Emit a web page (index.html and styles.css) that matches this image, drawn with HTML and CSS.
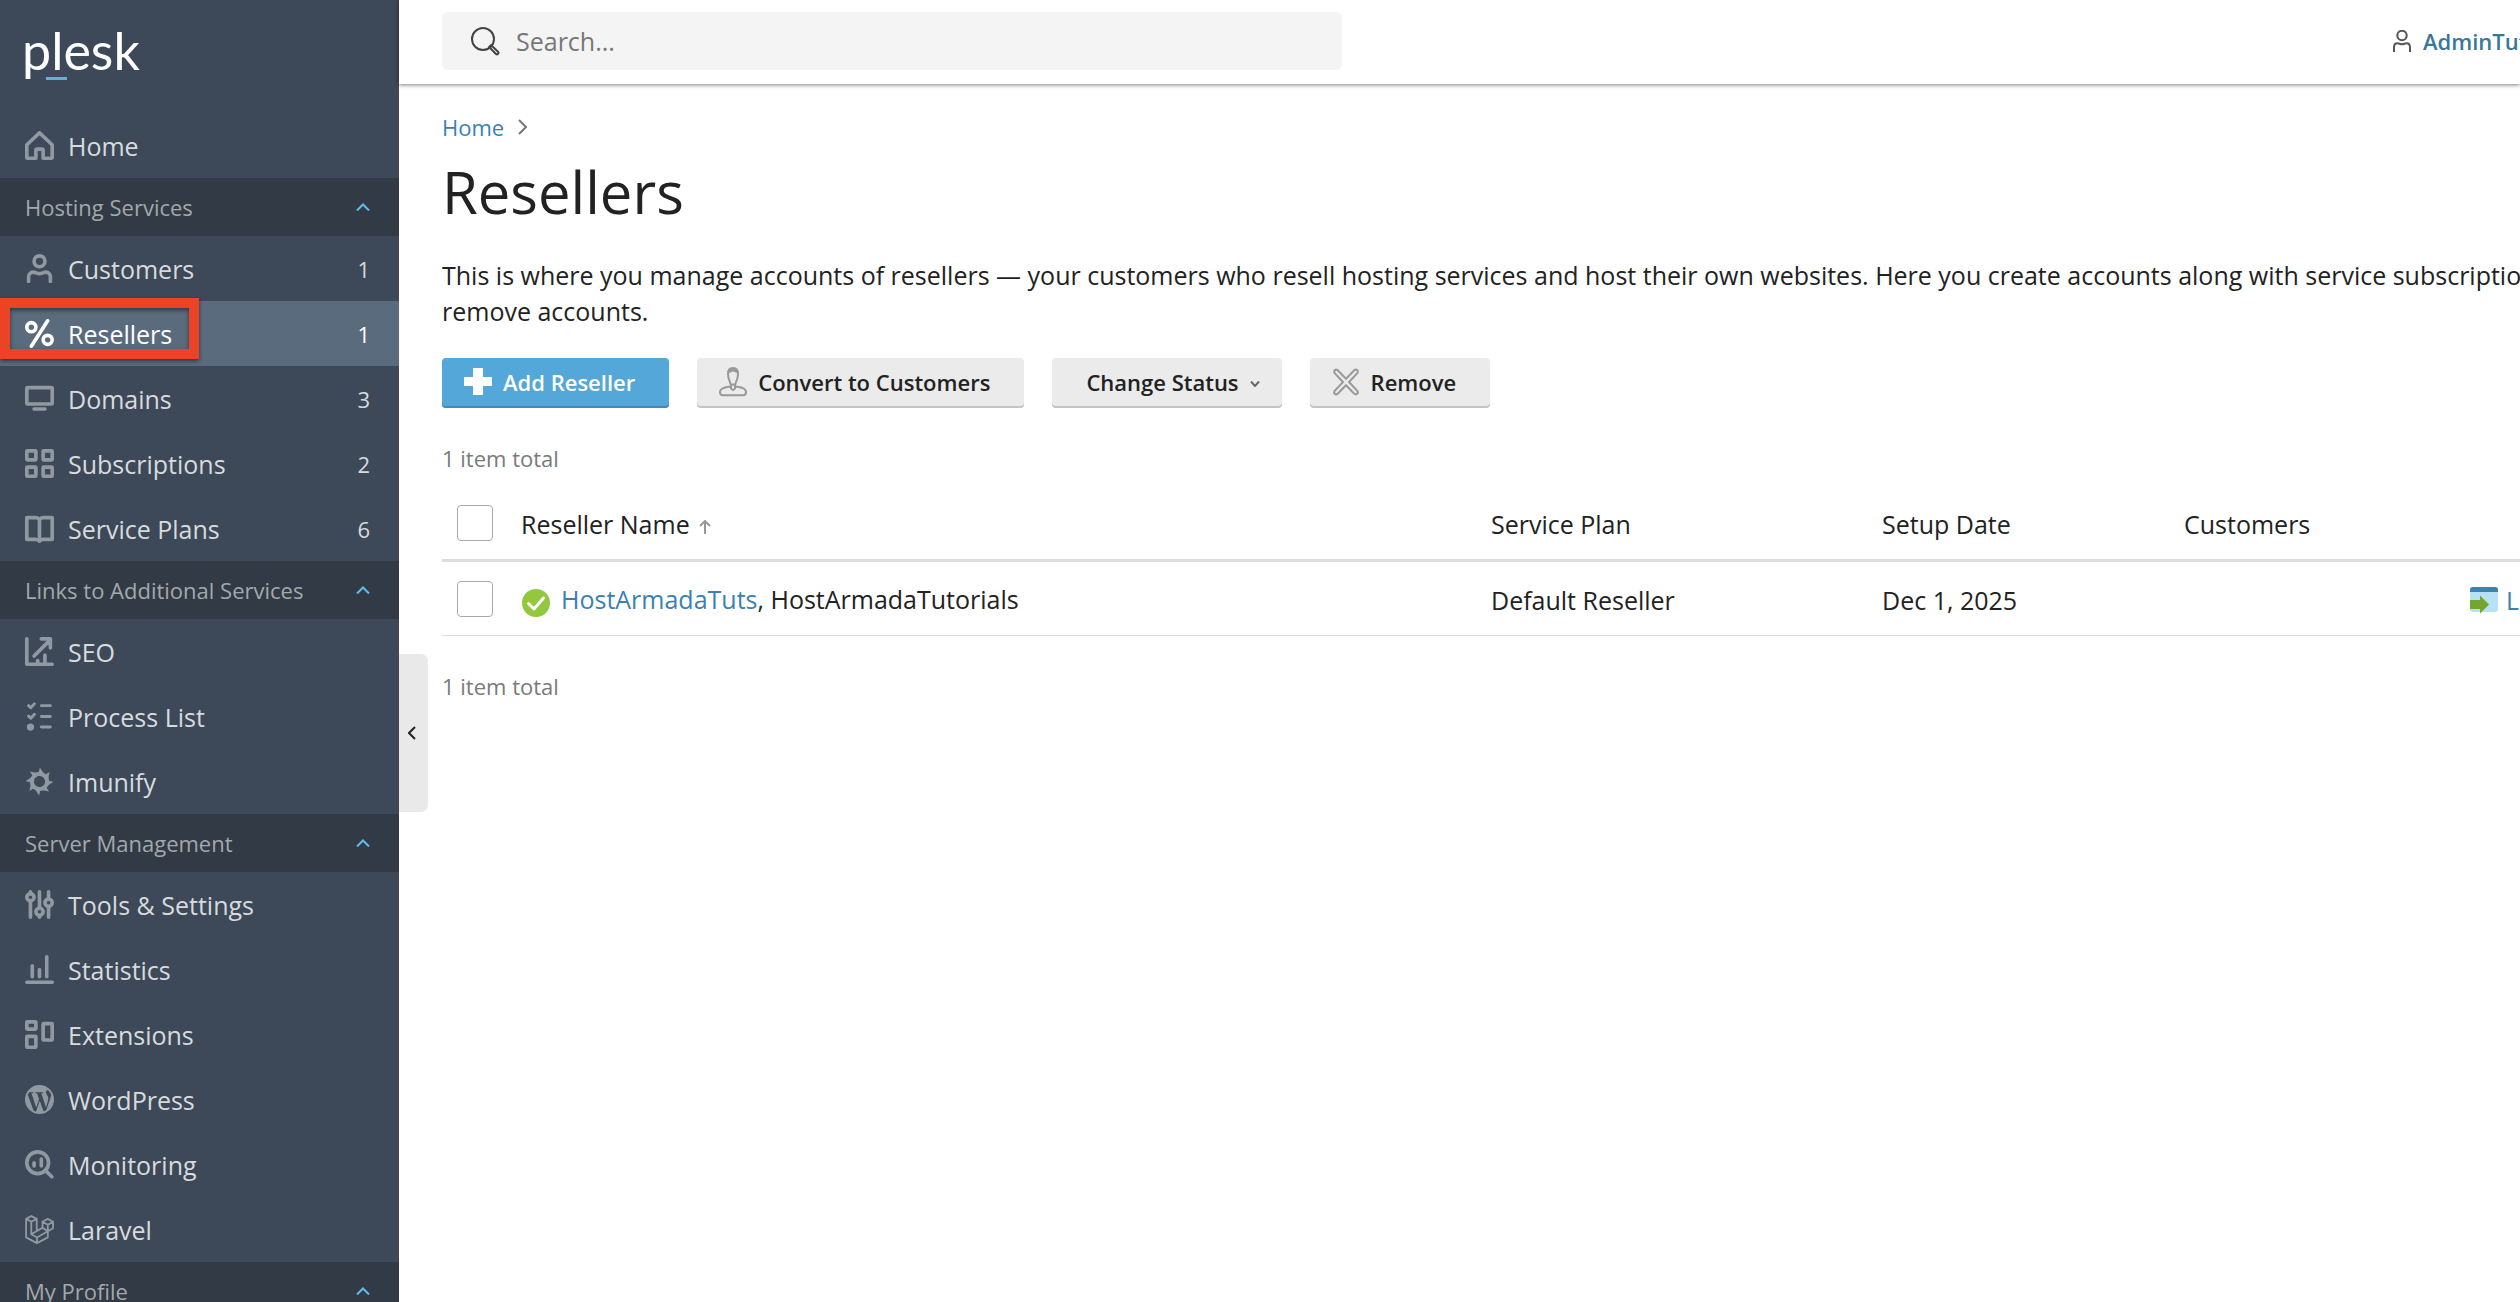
FILE: index.html
```html
<!DOCTYPE html>
<html lang="en">
<head>
<meta charset="utf-8">
<meta name="viewport" content="width=device-width, initial-scale=1">
<title>Resellers - Plesk</title>
<link rel="stylesheet" href="styles.css">
</head>
<body>
<div class="app">
  <aside class="sidebar">
    <a class="logo" href="#">plesk</a>
    <nav>
      <ul class="menu">
        <li><a class="item" href="#"><svg class="icon" viewBox="0 0 16 16"><path d="M1 7.6 8 1l7 6.6V14.5a.5.5 0 0 1-.5.5H10v-4.2a.8.8 0 0 0-.8-.8H6.8a.8.8 0 0 0-.8.8V15H1.5a.5.5 0 0 1-.5-.5z"/></svg><span class="label">Home</span></a></li>
      </ul>
      <button class="section" type="button">Hosting Services<svg class="caret" viewBox="0 0 14 8"><path d="M1 7.5 7 1.5l6 6"/></svg></button>
      <ul class="menu">
        <li><a class="item" href="#"><svg class="icon" viewBox="0 0 16 16"><circle cx="8" cy="4" r="3"/><path d="M2 15.2V12.5A2.5 2.5 0 0 1 4.5 10c1.4 0 2 .8 3.5.8s2.1-.8 3.5-.8a2.5 2.5 0 0 1 2.5 2.5v2.7"/></svg><span class="label">Customers</span><span class="count">1</span></a></li>
        <li class="marked"><a class="item active" href="#" aria-current="page"><svg class="icon" viewBox="0 0 16 16"><circle cx="3.5" cy="4.5" r="2.5"/><circle cx="12.5" cy="11.5" r="2.5"/><path d="M12.5 1 3.5 15"/></svg><span class="label">Resellers</span><span class="count">1</span></a></li>
        <li><a class="item" href="#"><svg class="icon" viewBox="0 0 16 16"><rect x="1" y="2" width="14" height="9" rx=".5"/><path d="M5 13.8h6"/></svg><span class="label">Domains</span><span class="count">3</span></a></li>
        <li><a class="item" href="#"><svg class="icon" viewBox="0 0 16 16"><rect x="1" y="1" width="5" height="5" rx=".3"/><rect x="10" y="1" width="5" height="5" rx=".3"/><rect x="1" y="10" width="5" height="5" rx=".3"/><rect x="10" y="10" width="5" height="5" rx=".3"/></svg><span class="label">Subscriptions</span><span class="count">2</span></a></li>
        <li><a class="item" href="#"><svg class="icon" viewBox="0 0 16 16"><path d="M8 3.2C7.5 2.4 6.8 2 6 2H1v12h5c.8 0 1.5.3 2 1 .5-.7 1.2-1 2-1h5V2h-5c-.8 0-1.5.4-2 1.2zM8 3.2V14.5"/></svg><span class="label">Service Plans</span><span class="count">6</span></a></li>
      </ul>
      <button class="section" type="button">Links to Additional Services<svg class="caret" viewBox="0 0 14 8"><path d="M1 7.5 7 1.5l6 6"/></svg></button>
      <ul class="menu">
        <li><a class="item" href="#"><svg class="icon" viewBox="0 0 16 16"><path d="M1 1v14h14M5 10.5 13.5 2M9 1h5v5M7 13v1M11 10v4"/></svg><span class="label">SEO</span></a></li>
        <li><a class="item" href="#"><svg class="icon" viewBox="0 0 16 16"><path class="thin" d="M9 2h5M9 8h5M9 13.8h5M2 2l1.2 1.2L5.2 1M2 7.8 3.2 9l2-2.2"/><circle class="solid" cx="3" cy="13.8" r="2"/></svg><span class="label">Process List</span></a></li>
        <li><a class="item" href="#"><svg class="icon" viewBox="0 0 24 24"><defs><path id="blade" class="solid" d="M12.3.5 16.5 6.8 15 8 7.5 6.5 11.3 4.8z"/></defs><use href="#blade"/><use href="#blade" transform="rotate(45 12 12)"/><use href="#blade" transform="rotate(90 12 12)"/><use href="#blade" transform="rotate(135 12 12)"/><use href="#blade" transform="rotate(180 12 12)"/><use href="#blade" transform="rotate(225 12 12)"/><use href="#blade" transform="rotate(270 12 12)"/><use href="#blade" transform="rotate(315 12 12)"/><circle cx="12" cy="12" r="6.5"/></svg><span class="label">Imunify</span></a></li>
      </ul>
      <button class="section" type="button">Server Management<svg class="caret" viewBox="0 0 14 8"><path d="M1 7.5 7 1.5l6 6"/></svg></button>
      <ul class="menu">
        <li><a class="item" href="#"><svg class="icon" viewBox="0 0 16 16"><circle cx="3" cy="4" r="2"/><circle cx="8" cy="12" r="2"/><circle cx="13" cy="7" r="2"/><path d="M3 1v1M3 6.5V15M8 1v8.5M8 14.5v.5M13 1v4M13 9.5V15"/></svg><span class="label">Tools &amp; Settings</span></a></li>
        <li><a class="item" href="#"><svg class="icon" viewBox="0 0 16 16"><path d="M1 15h14M4 6v6M8 8v4M12 1v11"/></svg><span class="label">Statistics</span></a></li>
        <li><a class="item" href="#"><svg class="icon" viewBox="0 0 16 16"><rect x="1" y="1" width="5" height="4" rx=".3"/><rect x="1" y="9" width="5" height="6" rx=".3"/><rect x="10" y="2" width="5" height="9" rx=".3"/></svg><span class="label">Extensions</span></a></li>
        <li><a class="item" href="#"><svg class="icon" viewBox="0 0 24 24"><circle class="thin" cx="12" cy="12" r="11.2"/><path class="solid" d="M21.469 6.825c.84 1.537 1.318 3.3 1.318 5.175 0 3.979-2.156 7.456-5.363 9.325l3.295-9.527c.615-1.54.82-2.771.82-3.864 0-.405-.026-.78-.07-1.11m-7.981.105c.647-.03 1.232-.105 1.232-.105.582-.075.514-.93-.067-.899 0 0-1.755.135-2.88.135-1.064 0-2.85-.15-2.85-.15-.585-.03-.661.855-.075.885 0 0 .54.061 1.125.09l1.68 4.605-2.37 7.08L5.354 6.9c.649-.03 1.234-.1 1.234-.1.585-.075.516-.93-.065-.896 0 0-1.746.138-2.874.138-.2 0-.438-.008-.69-.015C4.911 3.15 8.235 1.215 12 1.215c2.809 0 5.365 1.072 7.286 2.833-.046-.003-.091-.009-.141-.009-1.06 0-1.812.923-1.812 1.914 0 .89.513 1.643 1.06 2.531.411.72.89 1.643.89 2.977 0 .915-.354 1.994-.821 3.479l-1.075 3.585-3.9-11.61.001.014zM12 22.784c-1.059 0-2.081-.153-3.048-.437l3.237-9.406 3.315 9.087c.024.053.05.101.078.149-1.12.393-2.325.609-3.582.609M1.211 12c0-1.564.336-3.05.935-4.39L7.29 21.709C3.694 19.96 1.212 16.271 1.211 12"/></svg><span class="label">WordPress</span></a></li>
        <li><a class="item" href="#"><svg class="icon" viewBox="0 0 16 16"><circle cx="7" cy="7" r="6"/><path d="M11.5 11.5 14.8 14.8M5 7v1.8M9 5v3.8"/></svg><span class="label">Monitoring</span></a></li>
        <li><a class="item" href="#"><svg class="icon" viewBox="0 0 24 24"><path class="fine" d="M.9 3.2v15.3l9 4.8 9-4.8v-5.1l4.3-2.5V5.6L18.9 3.2l-4.4 2.4v5L9.7 13.3V3.2L5.2.9zM.9 3.2l4.3 2.4 4.5-2.4M5.2 5.6v10.3l4.7 2.7 9-5.2M9.9 18.6v4.7M5.2 15.9l9.3-5.3M14.5 5.6l4.4 2.5 4.3-2.5M18.9 8.1v5.3M14.5 10.6l4.4 2.8"/></svg><span class="label">Laravel</span></a></li>
      </ul>
      <button class="section" type="button">My Profile<svg class="caret" viewBox="0 0 14 8"><path d="M1 7.5 7 1.5l6 6"/></svg></button>
    </nav>
  </aside>

  <div class="main">
    <button class="collapse" type="button" aria-label="Collapse sidebar"><svg viewBox="0 0 8 14"><path d="M7 1 1 7l6 6"/></svg></button>
    <header class="topbar">
      <label class="search">
        <svg viewBox="0 0 29 29"><circle cx="12" cy="12" r="11"/><path d="m18.2 20 1.9-1.9 6.9 6.6c1.4 1.5-.6 3.5-2.1 2.2z"/></svg>
        <input type="search" placeholder="Search..." aria-label="Search">
      </label>
      <a class="user" href="#"><svg viewBox="0 0 18 22"><circle cx="9" cy="5.5" r="4.7"/><path d="M1 22v-4.5C1 15 2.3 13.3 4.5 13.3c1.8 0 2.5 1 4.5 1s2.7-1 4.5-1c2.2 0 3.5 1.7 3.5 4.2V22"/></svg>AdminTuts</a>
    </header>

    <main class="content">
      <nav class="crumbs" aria-label="Breadcrumb"><a href="#">Home</a><svg viewBox="0 0 9 16"><path d="m1 1 7 7-7 7"/></svg></nav>
      <h1>Resellers</h1>
      <p class="intro">This is where you manage accounts of resellers — your customers who resell hosting services and host their own websites. Here you create accounts along with service subscriptions,<br>remove accounts.</p>

      <div class="toolbar">
        <button class="btn primary" type="button"><svg class="btn-icon" viewBox="0 0 28 28"><path d="M9 0h10v9h9v9h-9v9H9v-9H0V9h9z"/></svg>Add Reseller</button>
        <button class="btn" type="button"><svg class="btn-icon" viewBox="0 0 28 28"><path d="M14 0c-3.4 0-5 2.6-5 6 0 3.2 1 6.2 2 8.2.6 1.3 1 2.3 1 4.3-3.5.7-11 .5-11 5.5 0 2.3 1 3.2 3 3.2h20c2 0 3-.9 3-3.2 0-5-7.5-4.8-11-5.5 0-2 .4-3 1-4.3 1-2 2-5 2-8.2 0-3.4-1.6-6-5-6zM11.3 15.5c1.5 1.3 3.9 1.3 5.4 0M12 18.5v2l2 1.5 2-1.5v-2"/><path class="hair" d="M9.5 4.5C11 1 17 1 18.5 4.5"/></svg>Convert to Customers</button>
        <button class="btn menu-btn" type="button">Change Status<svg class="drop" viewBox="0 0 10 6"><path d="m1 .5 4 4.5 4-4.5"/></svg></button>
        <button class="btn" type="button"><svg class="btn-icon" viewBox="0 0 28 28"><path d="m5.5 2 8.5 8.8L22.5 2c2-1.2 4.2 1 3 3L17 14l8.5 9c1.2 2-1 4.2-3 3L14 17.2 5.5 26c-2 1.2-4.2-1-3-3L11 14 2.5 5c-1.2-2 1-4.2 3-3z"/></svg>Remove</button>
      </div>

      <p class="total total-top">1 item total</p>
      <table class="list">
        <colgroup><col class="c-check"><col><col class="c-plan"><col class="c-date"><col class="c-customers"><col class="c-action"></colgroup>
        <thead>
          <tr>
            <th class="check"><input type="checkbox" aria-label="Select all"></th>
            <th>Reseller Name<svg class="sort" viewBox="0 0 12 14"><path d="M6 14V1M1 6l5-5 5 5"/></svg></th>
            <th>Service Plan</th>
            <th>Setup Date</th>
            <th>Customers</th>
            <th></th>
          </tr>
        </thead>
        <tbody>
          <tr>
            <td class="check"><input type="checkbox" aria-label="Select HostArmadaTuts"></td>
            <td><svg class="status" viewBox="0 0 32 30"><circle cx="15" cy="15" r="14"/><path d="m7.500 15.500 5.500 5.500 9.500-11"/></svg><a href="#">HostArmadaTuts</a>, HostArmadaTutorials</td>
            <td>Default Reseller</td>
            <td>Dec 1, 2025</td>
            <td></td>
            <td><a class="login" href="#"><svg viewBox="0 0 28 28"><rect x="0" y="1" width="28" height="25" rx="3" fill="#b9e1f6"/><path d="M0 6V4a3 3 0 0 1 3-3h22a3 3 0 0 1 3 3v2z" fill="#3b82b5"/><path d="M0 14h10V9.500l9 9-9 9V23H0z" fill="#75a52e"/></svg>Log in</a></td>
          </tr>
        </tbody>
      </table>
      <p class="total total-bottom">1 item total</p>
    </main>
  </div>
</div>
</body>
</html>
```
FILE: styles.css
```css
*, *::before, *::after { box-sizing: border-box; }

html, body { height: 100%; }

body {
  margin: 0;
  overflow: hidden;
  background: #fff;
  color: #222;
  font-family: "Open Sans", "Noto Sans", sans-serif;
  font-size: 25px;
  line-height: 36px;
}

a { color: #3a81b3; text-decoration: none; }
p, h1, ul { margin: 0; padding: 0; }
button, input { font: inherit; color: inherit; border: 0; margin: 0; }
button { cursor: pointer; }
svg { display: block; flex: none; fill: none; stroke: currentColor; }

.app {
  display: flex;
  height: 100vh;
  overflow: hidden;
}

/* Sidebar */
.sidebar {
  flex: none;
  width: 399px;
  overflow: hidden;
  background: #3d4958;
  color: #d8dbde;
}

.logo {
  display: block;
  position: relative;
  height: 113px;
  padding: 20px 22px 0;
  color: #fff;
  font: 52px/60px Lato, sans-serif;
}

.logo::after {
  content: "";
  position: absolute;
  left: 46px;
  top: 77px;
  width: 21px;
  height: 3px;
  background: #62b2d3;
}

.menu { list-style: none; }

.item {
  display: flex;
  align-items: center;
  gap: 14px;
  height: 65px;
  padding: 0 29px 0 25px;
  color: inherit;
}

.label { flex: 1; }
.count { font-size: 22px; }

.icon {
  width: 29px;
  height: 29px;
  color: #9099a2;
  stroke-width: 2;
  stroke-linecap: round;
  stroke-linejoin: round;
}

.icon[viewBox="0 0 24 24"] { stroke-width: 3; }
.icon .thin { stroke-width: 1.6; }
.icon .fine { stroke-width: 1.5; }
.icon .solid { fill: currentColor; stroke: none; }

.active { background: #5a6b7d; color: #fff; }
.active .icon { color: #fff; }

.marked { position: relative; }

.marked::after {
  content: "";
  position: absolute;
  left: 0;
  top: -3px;
  width: 199px;
  height: 61px;
  border: 10px solid #ec4226;
  filter: drop-shadow(0 2px 2px rgba(0, 0, 0, .5));
  pointer-events: none;
}

.section {
  display: flex;
  align-items: center;
  justify-content: space-between;
  width: 100%;
  height: 58px;
  padding: 0 29px 0 25px;
  background: #313a45;
  color: #a3a8ac;
  font-size: 22px;
  text-align: left;
}

.caret { width: 14px; height: 8px; color: #62bbf0; stroke-width: 2; }

/* Main column */
.main { position: relative; flex: 1; min-width: 0; }

.collapse {
  position: absolute;
  left: 0;
  top: 654px;
  width: 29px;
  height: 158px;
  padding: 0 0 0 9px;
  background: #e9e9e9;
  border-radius: 0 7px 7px 0;
}

.collapse svg { width: 8px; height: 14px; stroke-width: 2; }

.topbar {
  display: flex;
  align-items: center;
  justify-content: space-between;
  height: 84px;
  padding: 0 0 2px 43px;
  box-shadow: 0 1px 4px rgba(0, 0, 0, .5);
}

.search {
  display: flex;
  align-items: center;
  gap: 16px;
  width: 900px;
  height: 58px;
  padding: 0 29px;
  border-radius: 6px;
  background: #f4f4f4;
}

.search svg { width: 29px; height: 29px; color: #444; stroke-width: 2; }
.search input { flex: 1; height: 36px; padding: 0; background: none; outline: 0; }
.search input::placeholder { color: #777; opacity: 1; }

.user {
  display: flex;
  align-items: center;
  gap: 12px;
  width: 127px;
  color: #3a779c;
  font-size: 22px;
  font-weight: 600;
  white-space: nowrap;
}

.user svg { width: 18px; height: 22px; color: #555; stroke-width: 2; }

.content { padding: 27px 0 0 43px; }

.crumbs {
  display: flex;
  align-items: center;
  gap: 14px;
  font-size: 22px;
  line-height: 32px;
}

.crumbs svg { width: 9px; height: 16px; color: #777; stroke-width: 2; }

h1 {
  margin-top: 13px;
  font-size: 58px;
  font-weight: 400;
  line-height: 72px;
}

.intro { margin-top: 29px; white-space: nowrap; }

/* Buttons above the list */
.toolbar { display: flex; gap: 28px; margin-top: 29px; }

.btn {
  display: flex;
  align-items: center;
  gap: 11px;
  height: 50px;
  padding: 0 34px 2px 22px;
  border-radius: 4px;
  background: #ebebeb;
  box-shadow: inset 0 -2px #c4c4c4;
  font-size: 22px;
  font-weight: 600;
  white-space: nowrap;
}

.primary { background: #54a7d9; box-shadow: inset 0 -2px #4689b5; color: #fff; }
.menu-btn { padding: 0 22px 2px 34px; }
.btn-icon { width: 28px; height: 28px; color: #999; stroke-width: 2; overflow: visible; }
.btn-icon .hair { stroke-width: 3; }
.primary .btn-icon { fill: #fff; stroke: none; }
.drop { width: 10px; height: 6px; margin-top: 4px; color: #666; stroke-width: 2; }

.total { color: #7a7a7a; font-size: 22px; line-height: 32px; }
.total-top { margin: 34px 0 13px; }
.total-bottom { margin-top: 34px; }

/* Reseller list */
.list {
  width: 100%;
  table-layout: fixed;
  border-spacing: 0;
}

.c-check { width: 79px; }
.c-plan { width: 391px; }
.c-date { width: 302px; }
.c-customers { width: 286px; }
.c-action { width: 50px; }

th, td { padding: 2px 0 0; text-align: left; vertical-align: middle; white-space: nowrap; }
th { height: 75px; border-bottom: 3px solid #ddd; font-weight: 400; }
td { height: 74px; border-bottom: 1px solid #ddd; }
.check { padding: 0 0 0 15px; }

.check input {
  display: block;
  appearance: none;
  width: 36px;
  height: 36px;
  border: 1px solid #aaa;
  border-radius: 4px;
  background: #fff;
}

.sort { display: inline-block; width: 12px; height: 14px; margin-left: 9px; color: #999; stroke-width: 2; }

.status { display: inline-block; width: 32px; height: 30px; margin-right: 8px; vertical-align: middle; }
.status circle { fill: #93c83e; stroke: none; }
.status path { stroke: #fff; stroke-width: 3; stroke-linecap: round; stroke-linejoin: round; }

.login { display: flex; align-items: center; gap: 8px; }
.login svg { width: 28px; height: 28px; stroke: none; }
```
